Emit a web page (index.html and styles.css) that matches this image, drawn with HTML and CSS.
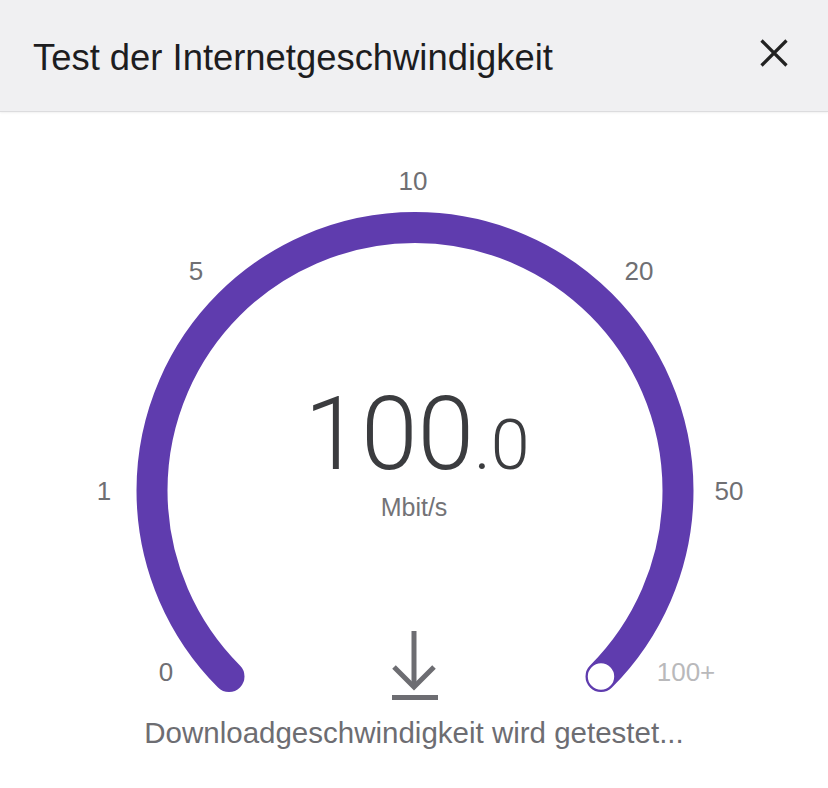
FILE: index.html
```html
<!DOCTYPE html>
<html lang="de">
<head>
<meta charset="utf-8">
<title>Test der Internetgeschwindigkeit</title>
<link rel="stylesheet" href="styles.css">
</head>
<body>
<div class="dialog">
  <header class="header">
    <h1 class="title">Test der Internetgeschwindigkeit</h1>
    <button class="close" aria-label="Schließen">
      <svg width="28" height="28" viewBox="0 0 28 28"><path d="M1.5 1.5 L26.5 26.5 M26.5 1.5 L1.5 26.5" stroke="#222" stroke-width="3.2" fill="none"/></svg>
    </button>
  </header>
  <section class="gauge">
    <svg class="gauge-svg" width="828" height="606" viewBox="0 0 828 606">
      <path d="M229 564.5 A263 263 0 1 1 601 564.5" fill="none" stroke="#5f3cae" stroke-width="31" stroke-linecap="round"/>
      <circle cx="601" cy="564.5" r="14" fill="#fff" stroke="#5f3cae" stroke-width="1.6"/>
      <g stroke="#6d6d72" stroke-width="5" fill="none">
        <path d="M414 519 V575"/>
        <path d="M394 555 L414 575 L434 555"/>
        <path d="M392 585.5 H438"/>
      </g>
    </svg>
    <span class="tick" style="left:413px;top:69px">10</span>
    <span class="tick" style="left:196px;top:159px">5</span>
    <span class="tick" style="left:639px;top:159px">20</span>
    <span class="tick" style="left:104px;top:379px">1</span>
    <span class="tick" style="left:729px;top:379px">50</span>
    <span class="tick" style="left:166px;top:560px">0</span>
    <span class="tick tick-max" style="left:686px;top:560px">100+</span>
    <div class="readout">
      <div class="value"><span class="value-int">100</span><span class="value-dec">.0</span></div>
      <div class="unit">Mbit/s</div>
    </div>
  </section>
  <p class="status">Downloadgeschwindigkeit wird getestet...</p>
</div>
</body>
</html>
```
FILE: styles.css
```css
html, body {
  margin: 0;
  padding: 0;
  background: #ffffff;
}
body {
  width: 828px;
  height: 788px;
  overflow: hidden;
  font-family: "Liberation Sans", Arial, sans-serif;
}
.dialog {
  display: flex;
  flex-direction: column;
  width: 828px;
}
.header {
  display: flex;
  align-items: center;
  justify-content: space-between;
  height: 112px;
  padding: 0 40px 0 33px;
  box-sizing: border-box;
  background: #f0f0f2;
  border-bottom: 1px solid #dcdcde;
  box-shadow: 0 1px 2px rgba(0, 0, 0, 0.06);
}
.title {
  margin: 0;
  font-size: 36.4px;
  font-weight: 400;
  color: #1d1d1f;
  line-height: 1;
  padding-top: 5px;
}
.close {
  display: flex;
  padding: 0;
  margin: 0;
  border: 0;
  background: none;
  margin-top: -6px;
}
.gauge {
  position: relative;
  height: 606px;
}
.gauge-svg {
  position: absolute;
  left: 0;
  top: 0;
}
.tick {
  position: absolute;
  transform: translate(-50%, -50%);
  font-size: 26px;
  line-height: 1;
  color: #6f6f73;
}
.tick-max {
  color: #b9b9bb;
}
.readout {
  position: absolute;
  left: 0;
  right: 0;
  top: 271px;
  display: flex;
  flex-direction: column;
  align-items: center;
}
.value {
  font-family: Roboto, "Liberation Sans", sans-serif;
  font-weight: 300;
  color: #3b3c3f;
  line-height: 1;
  padding-left: 6px;
}
.value-int {
  font-size: 102px;
}
.value-dec {
  font-size: 70px;
}
.unit {
  margin-top: 10px;
  font-size: 25px;
  line-height: 1;
  color: #737377;
}
.status {
  margin: 0;
  text-align: center;
  font-size: 29.5px;
  line-height: 1;
  color: #6d6d72;
}
```
